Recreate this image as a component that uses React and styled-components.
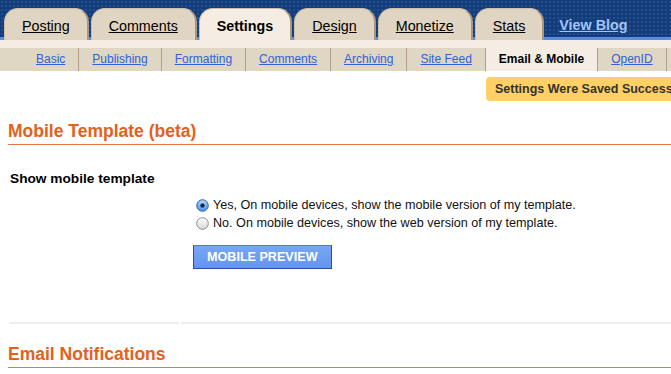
import React from 'react';
import styled, { createGlobalStyle } from 'styled-components';

const GlobalStyle = createGlobalStyle`
  html, body {
    margin: 0;
    padding: 0;
    background: #ffffff;
    overflow: hidden;
  }
  body {
    font-family: "Liberation Sans", Arial, sans-serif;
    color: #111;
  }
`;

const Page = styled.div`
  width: 671px;
`;

const TabBar = styled.div`
  height: 40px;
  box-sizing: border-box;
  padding: 8px 0 0 4px;
  display: flex;
  align-items: flex-end;
  background-color: #123c7a;
  background-image: radial-gradient(rgba(120, 160, 220, 0.18) 1px, transparent 1px);
  background-size: 4px 4px;
  box-shadow: inset 0 -3px 0 #5b8de2;
`;

const Tab = styled.a`
  height: 32px;
  box-sizing: border-box;
  padding: 3px 17px 0;
  margin-right: 2px;
  line-height: 29px;
  font-size: 14.3px;
  font-weight: ${(p) => (p.$active ? 'bold' : 'normal')};
  color: #000;
  text-decoration: ${(p) => (p.$active ? 'none' : 'underline')};
  white-space: nowrap;
  background: ${(p) => (p.$active ? '#f5ede3' : '#e0d5c2')};
  border: 1px solid #cdbfa8;
  border-right: 2px solid #a8967d;
  border-bottom: none;
  border-radius: 14px 14px 0 0;
`;

const ViewBlog = styled.a`
  margin-left: 13px;
  align-self: flex-end;
  padding-bottom: 7px;
  font-size: 14.3px;
  font-weight: bold;
  color: #a4c4f6;
  text-decoration: underline;
`;

const Strip = styled.div`
  height: 8px;
  background: #f5ede3;
`;

const SubNav = styled.div`
  height: 23px;
  padding-left: 23px;
  display: flex;
  background: #e0d6c4;
`;

const SubItem = styled.a`
  padding: 0 13px;
  line-height: 23px;
  font-size: 12px;
  white-space: nowrap;
  border-right: 1px solid #b09f86;
  color: ${(p) => (p.$active ? '#000' : '#2f62d6')};
  font-weight: ${(p) => (p.$active ? 'bold' : 'normal')};
  text-decoration: ${(p) => (p.$active ? 'none' : 'underline')};
  background: ${(p) => (p.$active ? '#f5ede3' : 'transparent')};
`;

const Content = styled.div`
  padding-left: 8px;
`;

const NoticeRow = styled.div`
  margin-top: 6px;
  padding-left: 478px;
  display: flex;
`;

const Notice = styled.div`
  height: 24px;
  line-height: 24px;
  padding: 0 9px;
  white-space: nowrap;
  font-size: 12.5px;
  font-weight: bold;
  color: #333;
  background: #ffd066;
  border-radius: 4px;
`;

const SectionTitle = styled.h2`
  margin: 20px 0 0;
  padding-bottom: 3px;
  line-height: 20px;
  font-size: 17.5px;
  font-weight: bold;
  color: #e3611a;
  border-bottom: 1px solid #e5763a;
`;

const Field = styled.div`
  margin: 26px 0 0 1px;
  display: grid;
  grid-template-columns: 170px 1fr;
  column-gap: 2px;
`;

const Cell = styled.div`
  border-bottom: 2px solid #eeeeee;
  padding: ${(p) => p.$pad || '0'};
`;

const FieldLabel = styled.div`
  line-height: 16px;
  font-size: 13.7px;
  font-weight: bold;
  color: #000;
  white-space: nowrap;
`;

const Option = styled.label`
  display: flex;
  align-items: center;
  gap: 4px;
  line-height: 18px;
  font-size: 12.6px;
  color: #111;
  white-space: nowrap;
`;

const RadioMark = styled.svg`
  margin-left: 3px;
  flex: none;
`;

const PreviewButton = styled.button`
  margin-top: 13px;
  height: 24px;
  padding: 0 13px;
  font-family: "Liberation Sans", Arial, sans-serif;
  font-size: 12.6px;
  font-weight: bold;
  color: #fff;
  background: linear-gradient(#78a6f5, #6495ee);
  border: 1px solid #2b4fa6;
  border-top-color: #4f79d4;
  cursor: pointer;
`;

function Radio({ checked }) {
  return (
    <RadioMark width="13" height="13" viewBox="0 0 13 13">
      <defs>
        <radialGradient id="rOn" cx="0.5" cy="0.3" r="0.7">
          <stop offset="0" stopColor="#c4e4ff" />
          <stop offset="1" stopColor="#3d87e0" />
        </radialGradient>
        <linearGradient id="rOff" x1="0" y1="0" x2="0" y2="1">
          <stop offset="0" stopColor="#ffffff" />
          <stop offset="1" stopColor="#d8d8d8" />
        </linearGradient>
      </defs>
      <circle
        cx="6.5"
        cy="6.5"
        r="5.8"
        fill={checked ? 'url(#rOn)' : 'url(#rOff)'}
        stroke={checked ? '#3a6db5' : '#8c8c8c'}
        strokeWidth="1"
      />
      {checked && <circle cx="6.5" cy="6.5" r="2.2" fill="#14284f" />}
    </RadioMark>
  );
}

const tabs = ['Posting', 'Comments', 'Settings', 'Design', 'Monetize', 'Stats'];
const subTabs = ['Basic', 'Publishing', 'Formatting', 'Comments', 'Archiving', 'Site Feed', 'Email & Mobile', 'OpenID'];

export default function App() {
  return (
    <Page>
      <GlobalStyle />
      <TabBar>
        {tabs.map((t) => (
          <Tab key={t} $active={t === 'Settings'}>{t}</Tab>
        ))}
        <ViewBlog>View Blog</ViewBlog>
      </TabBar>
      <Strip />
      <SubNav>
        {subTabs.map((t) => (
          <SubItem key={t} $active={t === 'Email & Mobile'}>{t}</SubItem>
        ))}
      </SubNav>

      <Content>
        <NoticeRow>
          <Notice>Settings Were Saved Successfully.</Notice>
        </NoticeRow>

        <SectionTitle>Mobile Template (beta)</SectionTitle>

        <Field>
          <Cell $pad="0 0 0 1px">
            <FieldLabel>Show mobile template</FieldLabel>
          </Cell>
          <Cell $pad="25px 0 53px 12px">
            <Option>
              <Radio checked />
              Yes, On mobile devices, show the mobile version of my template.
            </Option>
            <Option>
              <Radio />
              No. On mobile devices, show the web version of my template.
            </Option>
            <PreviewButton>MOBILE PREVIEW</PreviewButton>
          </Cell>
        </Field>

        <SectionTitle>Email Notifications</SectionTitle>
      </Content>
    </Page>
  );
}
